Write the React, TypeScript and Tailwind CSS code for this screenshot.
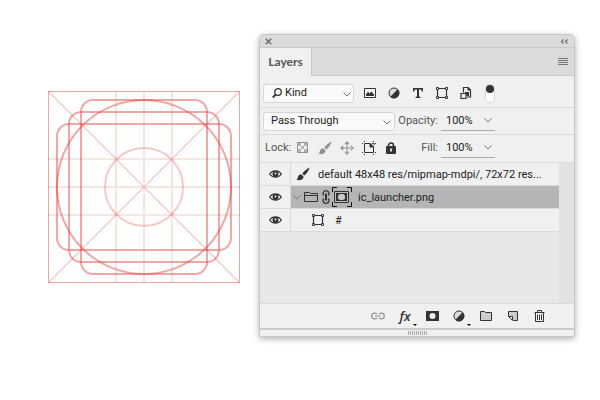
import React, { useState } from "react";

function Chevron({ className = "" }: { className?: string }) {
  return (
    <svg className={className} width="8" height="5" viewBox="0 0 8 5" fill="none" stroke="#777" aria-hidden="true">
      <path d="M.5.5 4 4 7.500.5" />
    </svg>
  );
}

function Guides() {
  return (
    <svg className="block w-full" viewBox="0 0 192 192" fill="none" role="img" aria-label="Icon keyline grid">
      <g stroke="#de3c3c" strokeOpacity=".14" strokeWidth="2">
        <path d="M68 0V192M96 0V192M124 0V192M0 68H192M0 96H192M0 124H192" />
      </g>
      <path d="M0 0 192 192M192 0 0 192" stroke="#d8453f" strokeOpacity=".32" strokeWidth="1.200" />
      <circle cx="96" cy="96" r="39" stroke="#de3c3c" strokeOpacity=".28" strokeWidth="2" />
      <g stroke="#e33b3b" strokeOpacity=".45" strokeWidth="2">
        <circle cx="96" cy="96" r="87" />
        <rect x="33" y="9" width="126" height="174" rx="12" />
        <rect x="21" y="21" width="150" height="150" rx="12" />
        <rect x="9" y="33" width="174" height="126" rx="12" />
      </g>
      <rect x=".5" y=".5" width="191" height="191" stroke="#e33b3b" strokeOpacity=".45" />
    </svg>
  );
}

function PictureIcon() {
  return (
    <svg width="12" height="12" viewBox="0 0 12 12" aria-hidden="true">
      <path d="M.5 1.500h11v9H.5z" fill="#f8f8f8" stroke="#333" />
      <path d="M2 9V7.500L4 4.500 5.500 6.500 7.500 4.500 10 7.500V9z" fill="#333" />
    </svg>
  );
}

function AdjustIcon() {
  return (
    <svg width="12" height="12" viewBox="0 0 12 12" aria-hidden="true">
      <circle cx="6" cy="6" r="5" fill="#ddd" stroke="#333" />
      <path d="M9.700 2.300a5.200 5.200 0 0 1-7.400 7.400z" fill="#333" />
    </svg>
  );
}

function TypeIcon() {
  return (
    <svg width="12" height="12" viewBox="0 0 12 12" fill="#333" aria-hidden="true">
      <path d="M1 1h10v3.500H9.700L9.200 2.500H7V9.500l1.500.4V11h-5V9.900L5 9.500v-7H2.800l-.5 2H1z" />
    </svg>
  );
}

function ShapeIcon() {
  return (
    <svg width="12" height="12" viewBox="0 0 12 12" fill="#f8f8f8" stroke="#333" aria-hidden="true">
      <path d="M2 1.500h8M2 10.500h8M1.500 2v8M10.500 2v8" strokeWidth="1.200" />
      <path d="M.5.5h2v2h-2zM9.500.5h2v2h-2zM.5 9.500h2v2h-2zM9.500 9.500h2v2h-2z" />
    </svg>
  );
}

function SmartIcon() {
  return (
    <svg width="12" height="12" viewBox="0 0 12 12" fill="none" stroke="#333" strokeWidth="1.200" aria-hidden="true">
      <path d="M3.500 5.500v-5H8l2.500 2.500v7H7" />
      <path d="M7.500 0v3.500H11z" fill="#333" stroke="none" />
      <path d="M5 5h4v4H6.500V6.500H5z" fill="#333" stroke="none" />
      <path d="M1 6.500h5v5H1z" fill="#f0f0f0" />
    </svg>
  );
}

function BrushIcon({ color }: { color: string }) {
  return (
    <svg className="shrink-0" width="14" height="14" viewBox="0 0 14 14" fill={color} aria-hidden="true">
      <path d="M13.600.4C11 1.500 7.500 4.500 6.300 6.800l2 1.800C10.500 6.800 13 3.500 13.600.4zM5.500 7.500C3.500 7 2.300 8.200 2 10c-.2 1.300-.7 2-1.600 2.300C2.500 14 7.500 13.300 7.600 9.400z" />
    </svg>
  );
}

function CheckerIcon() {
  return (
    <svg width="12" height="12" viewBox="0 0 12 12" aria-hidden="true">
      <path d="M.5.500h10v10H.5z" fill="#f0f0f0" stroke="#929292" />
      <path d="M1 1h3v3H1zM7 1h3v3H7zM4 4h3v3H4zM1 7h3v3H1zM7 7h3v3H7z" fill="#b4b4b4" />
    </svg>
  );
}

function MoveIcon() {
  return (
    <svg width="14" height="14" viewBox="0 0 13 13" fill="#929292" aria-hidden="true">
      <path d="M6 2h1v9H6zM2 6h9v1H2zM6.500 0 9 3H4zM6.500 13 9 10H4zM0 6.500 3 4v5zM13 6.500 10 4v5z" />
    </svg>
  );
}

function ArtboardIcon() {
  return (
    <svg width="14" height="14" viewBox="0 0 14 14" fill="none" stroke="#333" aria-hidden="true">
      <path d="M2.500 2.500v9H11.500V6L8 2.500z" />
      <path d="M8 2.500V6h3.500z" fill="#333" />
      <path d="M2 .5h1M0 2.500h1M11 .5h1M13 2.500h1M2 13.500h1M0 11.500h1M11 13.500h1M13 11.500h1M10 2.500h2V4" />
    </svg>
  );
}

function LockIcon() {
  return (
    <svg width="10" height="12" viewBox="0 0 10 12" aria-hidden="true">
      <path d="M2.500 5.500V3.500a2.500 2.500 0 0 1 5 0v2" fill="none" stroke="#333" strokeWidth="1.500" />
      <rect y="4" width="10" height="8" rx="1" fill="#333" />
      <path d="M4 6.500h2v3H4z" fill="#ddd" />
    </svg>
  );
}

function EyeIcon() {
  return (
    <svg width="13" height="8" viewBox="0 0 13 8" aria-hidden="true">
      <path d="M.6 4C3.500-.2 9.500-.2 12.400 4 9.500 8.200 3.500 8.200.6 4z" fill="#fff" stroke="#333" strokeWidth="1.200" />
      <circle cx="6.500" cy="4" r="3" fill="#333" />
      <circle cx="6.500" cy="3.600" r="1" fill="#eee" />
    </svg>
  );
}

function OpenFolderIcon() {
  return (
    <svg width="14" height="12" viewBox="0 0 14 12" fill="none" stroke="#333" aria-hidden="true">
      <path d="M.5 10.500v-9h5l1 1h7v8z" />
      <path d="M.5 4.500h13" />
    </svg>
  );
}

function FolderIcon() {
  return (
    <svg width="12" height="12" viewBox="0 0 12 12" fill="#ccc" stroke="#333" aria-hidden="true">
      <path d="M.5 10.500v-9h4l1 1h6v8z" />
    </svg>
  );
}

function ChainIcon() {
  return (
    <svg width="8" height="14" viewBox="0 0 8 14" fill="none" stroke="#333" strokeWidth="1.300" aria-hidden="true">
      <path d="M2 5.500C.5 4.500.6.700 4 .7s3.500 3.800 2 4.800M2 8.500C.5 9.500.6 13.300 4 13.300s3.500-3.800 2-4.800" />
      <path d="M4 3.500v7" strokeWidth="2" />
    </svg>
  );
}

function MaskThumb() {
  return (
    <svg width="20" height="20" viewBox="0 0 20 20" fill="none" aria-hidden="true">
      <path d="M.5 5V.5H5M15 .5h4.500V5M.5 15v4.500H5M15 19.500h4.500V15" stroke="#111" />
      <path d="M2.500 4.500h14v11h-14z" fill="#bbb" stroke="#333" />
      <path d="M4 6h11v8H4z" fill="#333" />
      <rect x="6" y="7" width="7" height="6" rx="2.500" fill="#c8c8c8" />
    </svg>
  );
}

function MaskIcon() {
  return (
    <svg width="13" height="12" viewBox="0 0 13 12" aria-hidden="true">
      <path d="M0 1h13v10H0z" fill="#333" />
      <circle cx="6.500" cy="6" r="3" fill="#eee" />
    </svg>
  );
}

function LinkIcon() {
  return (
    <svg width="14" height="8" viewBox="0 0 14 8" fill="none" stroke="#929292" strokeWidth="1.200" aria-hidden="true">
      <path d="M6 2.300C5 .5.7.5.700 4S5 7.500 6 5.700M8 2.300c1-1.800 5.300-1.800 5.300 1.700S9 7.500 8 5.700M4 4h6" />
    </svg>
  );
}

function NewLayerIcon() {
  return (
    <svg width="12" height="12" viewBox="0 0 12 12" aria-hidden="true">
      <path d="M1.500 6.500v-5h9v9h-4" fill="#ccc" stroke="#333" />
      <path d="M1.500 6.500h4v4z" fill="#f0f0f0" stroke="#333" />
    </svg>
  );
}

function TrashIcon() {
  return (
    <svg width="12" height="13" viewBox="0 0 12 13" fill="none" stroke="#333" aria-hidden="true">
      <path d="M.5 2.500h10M3.500 2V.5h4V2M1.500 3v8.500h8V3M3.500 4.500V10M5.500 4.500V10M7.500 4.500V10" />
    </svg>
  );
}

function IconButton({ label, width = "w-6", className = "", children }: { label: string; width?: string; className?: string; children: React.ReactNode }) {
  return (
    <button type="button" aria-label={label} className={`flex h-6 shrink-0 items-center justify-center ${width} ${className}`}>
      {children}
    </button>
  );
}

function Percent({ label, id }: { label: string; id: string }) {
  return (
    <div className="flex items-center">
      <label htmlFor={id} className="w-[43px] pr-[3px] text-right text-[#555]">{label}</label>
      <div className="flex h-[19px] w-[54px] items-center border-b border-[#aaa] pr-[3px] pl-[5px]">
        <input id={id} defaultValue="100%" className="w-0 min-w-0 flex-1 bg-transparent text-[#222] outline-none" />
        <button type="button" aria-label={`${label} slider`}><Chevron /></button>
      </div>
    </div>
  );
}

function LayerRow({ label, selected = false, indent, children }: { label: string; selected?: boolean; indent: string; children: React.ReactNode }) {
  return (
    <li className="flex h-[23px] border-b border-[#dadada] bg-[#f0f0f0]">
      <button type="button" aria-label={`Toggle visibility of ${label}`} className="flex w-[31px] shrink-0 items-center justify-center border-r border-[#dadada]">
        <EyeIcon />
      </button>
      <div className={`flex min-w-0 flex-1 items-center ${indent} ${selected ? "bg-[#b5b5b5]" : ""}`}>
        {children}
        <span className="truncate pt-px text-[#222]">{label}</span>
      </div>
    </li>
  );
}

function Panel() {
  const [filtering, setFiltering] = useState(true);
  const select = "h-full w-full appearance-none rounded-[3px] border border-[#d6d6d6] bg-[#fafafa] text-[#222] outline-none";
  return (
    <section aria-label="Layers" className="min-w-0 flex-1 overflow-hidden rounded-t-[5px] rounded-b-[2px] border border-[#c6c6c6] bg-[#f0f0f0] shadow-[0_2px_6px_rgba(0,0,0,0.3)]">
      <div className="flex h-[13px] items-center justify-between border-b border-[#c9c9c9] bg-[#dbdbdb] px-[5px]">
        <button type="button" aria-label="Close">
          <svg width="7" height="7" viewBox="0 0 7 7" stroke="#666" strokeWidth="1.300"><path d="M.7.700l5.600 5.600M6.300.700.700 6.300" /></svg>
        </button>
        <button type="button" aria-label="Collapse">
          <svg width="9" height="5" viewBox="0 0 9 5" fill="none" stroke="#666" strokeWidth="1.200"><path d="M3.500.5l-2 2 2 2M7.500.5l-2 2 2 2" /></svg>
        </button>
      </div>
      <div className="flex h-[28px] bg-[#dbdbdb]">
        <h2 className="flex w-[52px] items-center justify-center border-r border-[#c9c9c9] bg-[#f0f0f0] font-[Lato,sans-serif] text-xs font-bold text-[#555]">Layers</h2>
        <div className="flex flex-1 items-center justify-end border-b border-[#c9c9c9] pr-[6px]">
          <button type="button" aria-label="Panel menu">
            <svg width="10" height="7" viewBox="0 0 10 7" stroke="#777"><path d="M0 .5h10M0 2.500h10M0 4.500h10M0 6.500h10" /></svg>
          </button>
        </div>
      </div>

      <div className="flex h-8 items-center border-b border-[#dadada] pt-[3px] pl-[3px]">
        <div className="relative mr-1 h-[19px] w-[91px]">
          <select aria-label="Filter type" className={`${select} pl-[21px]`}><option>Kind</option></select>
          <svg className="pointer-events-none absolute top-1 left-[9px]" width="10" height="10" viewBox="0 0 10 10" fill="none" stroke="#333" strokeWidth="1.300">
            <circle cx="6" cy="4" r="3.300" /><path d="M3.800 6.500.7 9.500" strokeWidth="1.800" />
          </svg>
          <Chevron className="pointer-events-none absolute top-[8px] right-[3px]" />
        </div>
        <IconButton label="Pixel layers"><PictureIcon /></IconButton>
        <IconButton label="Adjustment layers"><AdjustIcon /></IconButton>
        <IconButton label="Type layers"><TypeIcon /></IconButton>
        <IconButton label="Shape layers"><ShapeIcon /></IconButton>
        <IconButton label="Smart objects"><SmartIcon /></IconButton>
        <button type="button" role="switch" aria-label="Layer filtering" aria-checked={filtering} onClick={() => setFiltering(!filtering)} className={`ml-[7px] flex h-[19px] w-[10px] justify-center rounded-full border border-[#d6d6d6] bg-white ${filtering ? "items-start" : "items-end"}`}>
          <span className="size-2 rounded-full bg-[#333]" />
        </button>
      </div>

      <div className="flex h-[27px] items-center border-b border-[#dadada] pl-[3px]">
        <div className="relative mr-[3px] h-[19px] w-[132px]">
          <select aria-label="Blend mode" className={`${select} pl-[7px]`}><option>Pass Through</option></select>
          <Chevron className="pointer-events-none absolute top-[8px] right-[4px]" />
        </div>
        <Percent id="opacity" label="Opacity:" />
      </div>

      <div className="flex h-[28px] items-center border-b border-[#dadada] pb-px pl-[5px]">
        <span className="w-[27px] text-[#555]">Lock:</span>
        <div className="flex w-[106px] grow-0">
          <IconButton width="w-[22px]" label="Lock transparent pixels"><CheckerIcon /></IconButton>
          <IconButton width="w-[22px]" label="Lock image pixels"><BrushIcon color="#929292" /></IconButton>
          <IconButton width="w-[22px]" label="Lock position"><MoveIcon /></IconButton>
          <IconButton width="w-[22px]" label="Prevent auto-nesting"><ArtboardIcon /></IconButton>
          <IconButton width="w-[22px]" label="Lock all"><LockIcon /></IconButton>
        </div>
        <Percent id="fill" label="Fill:" />
      </div>

      <div className="flex h-[141px] border-b border-[#dadada] bg-[#e8e8e8]">
        <ul className="min-w-0 flex-1">
          <LayerRow label="default 48x48 res/mipmap-mdpi/, 72x72 res..." indent="pl-[5px] gap-2">
            <BrushIcon color="#333" />
          </LayerRow>
          <LayerRow label="ic_launcher.png" indent="pl-[2px]" selected>
            <button type="button" aria-label="Collapse group"><Chevron /></button>
            <span className="mr-1 ml-[3px]"><OpenFolderIcon /></span>
            <ChainIcon />
            <span className="mr-[6px] ml-[2px]"><MaskThumb /></span>
          </LayerRow>
          <LayerRow label="#" indent="pl-[21px] gap-[11px]">
            <ShapeIcon />
          </LayerRow>
        </ul>
        <div className="w-[15px] bg-[#e2e2e2]" />
      </div>

      <div className="flex h-6 items-center justify-end gap-[3px] pr-[22px]">
        <IconButton label="Link layers"><LinkIcon /></IconButton>
        <IconButton label="Layer style" className="relative">
          <span className="font-['Open_Sans',sans-serif] text-[13px] font-semibold italic">fx</span>
          <span className="absolute right-0 bottom-[2px] border-x-2 border-t-2 border-x-transparent border-t-black" />
        </IconButton>
        <IconButton label="Add mask"><MaskIcon /></IconButton>
        <IconButton label="New adjustment layer" className="relative">
          <AdjustIcon />
          <span className="absolute right-0 bottom-[2px] border-x-2 border-t-2 border-x-transparent border-t-black" />
        </IconButton>
        <IconButton label="New group"><FolderIcon /></IconButton>
        <IconButton label="New layer"><NewLayerIcon /></IconButton>
        <IconButton label="Delete layer"><TrashIcon /></IconButton>
      </div>
      <div className="flex h-2 items-start justify-center border-t-2 border-[#cacaca] pt-px">
        <svg width="19" height="4" viewBox="0 0 19 4" fill="none" stroke="#aaa" aria-hidden="true"><path d="M.5 0v4M2.500 0v4M4.500 0v4M6.500 0v4M8.500 0v4M10.500 0v4M12.500 0v4M14.500 0v4M16.500 0v4M18.500 0v4" /></svg>
      </div>
    </section>
  );
}

export default function App() {
  return (
    <main className="flex min-h-screen items-start bg-white pt-[34px] pr-[25px] pl-12 font-[Roboto,sans-serif] text-[11px] leading-4 text-[#333]">
      <div className="mt-[57px] mr-[19px] w-48 shrink-0"><Guides /></div>
      <Panel />
    </main>
  );
}
